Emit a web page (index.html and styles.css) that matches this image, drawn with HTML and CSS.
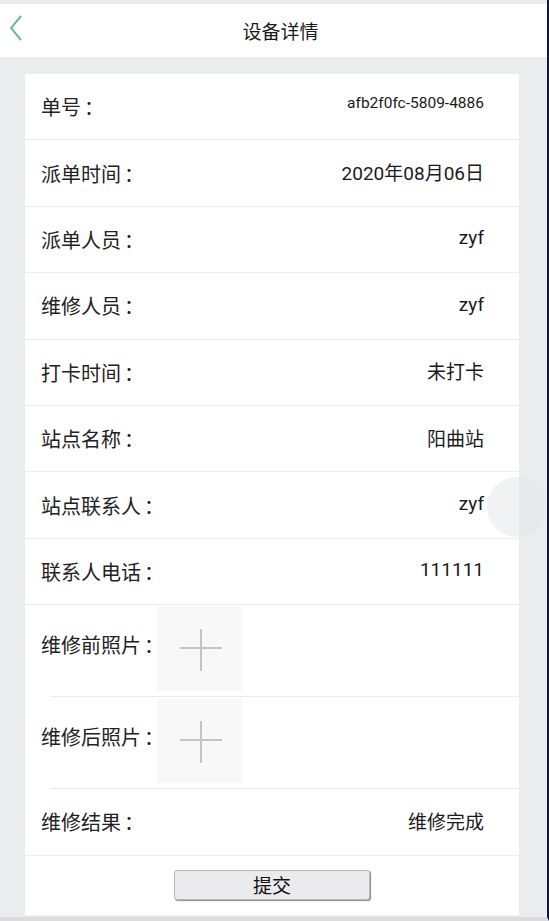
FILE: index.html
```html
<!DOCTYPE html>
<html lang="zh">
<head>
  <meta charset="UTF-8">
  <title>设备详情</title>
  <link rel="stylesheet" href="styles.css">
</head>
<body>

  <div class="header">
    <span class="back">
      <svg width="14" height="26" viewBox="0 0 14 26"><polyline points="12,1 2,13 12,25" fill="none" stroke="#6dbb8f" stroke-width="2"/></svg>
    </span>
    <h1>设备详情</h1>
  </div>

  <div class="card">
    <div class="row">
      <span class="label">单号<span class="colon">：</span></span>
      <span class="value small">afb2f0fc-5809-4886</span>
    </div>
    <div class="row">
      <span class="label">派单时间<span class="colon">：</span></span>
      <span class="value">2020年08月06日</span>
    </div>
    <div class="row">
      <span class="label">派单人员<span class="colon">：</span></span>
      <span class="value">zyf</span>
    </div>
    <div class="row">
      <span class="label">维修人员<span class="colon">：</span></span>
      <span class="value">zyf</span>
    </div>
    <div class="row">
      <span class="label">打卡时间<span class="colon">：</span></span>
      <span class="value">未打卡</span>
    </div>
    <div class="row">
      <span class="label">站点名称<span class="colon">：</span></span>
      <span class="value">阳曲站</span>
    </div>
    <div class="row">
      <span class="label">站点联系人<span class="colon">：</span></span>
      <span class="value">zyf</span>
    </div>
    <div class="row">
      <span class="label">联系人电话<span class="colon">：</span></span>
      <span class="value">111111</span>
    </div>
    <div class="photo-row">
      <span class="label">维修前照片<span class="colon">：</span></span>
      <div class="photo-add"></div>
    </div>
    <div class="photo-row">
      <span class="label">维修后照片<span class="colon">：</span></span>
      <div class="photo-add"></div>
    </div>
    <div class="row">
      <span class="label">维修结果<span class="colon">：</span></span>
      <span class="value">维修完成</span>
    </div>
    <div class="actions">
      <button class="submit">提交</button>
    </div>
  </div>

  <div class="float-ball"></div>

</body>
</html>
```

FILE: styles.css
```css
html, body {
  margin: 0;
  height: 100%;
}
body {
  font-family: Roboto, "Noto Sans CJK SC", sans-serif;
  background: #ebecee;
  color: #1a1a1a;
  padding-top: 4px;
  box-sizing: border-box;
  border-right: 2px solid #14163a;
  border-bottom: 4px solid #dcdcde;
}
.header {
  position: relative;
  height: 53px;
  background: #fff;
  display: flex;
  align-items: center;
  justify-content: center;
}
.header h1 {
  margin: 0;
  font-size: 19px;
  font-weight: normal;
  padding-left: 14px;
}
.back {
  position: absolute;
  left: 9px;
  top: 11px;
}
.card {
  background: #fff;
  margin: 17px 28px 0 25px;
  width: 494px;
}
.row {
  display: flex;
  align-items: center;
  justify-content: space-between;
  height: 65.4px;
  padding: 0 35px 0 16px;
  border-bottom: 1px solid #ececec;
}
.label {
  font-size: 20px;
  color: #222;
}
.colon {
  font-family: "Noto Sans CJK TC", sans-serif;
  margin-left: 3px;
}
.value {
  font-size: 19px;
  margin-top: -3px;
}
.value.small {
  font-size: 15.5px;
  margin-top: -8px;
}
.photo-row {
  display: flex;
  align-items: center;
  height: 91px;
  padding-left: 16px;
  margin-left: 25px;
  border-bottom: 1px solid #ececec;
}
.photo-row .label {
  margin: -12px -7px 0 -25px;
}
.photo-add {
  position: relative;
  width: 85px;
  height: 85px;
  margin-top: -5px;
  background: #f8f8f8;
}
.photo-add::before,
.photo-add::after {
  content: "";
  position: absolute;
  background: #c4c4c4;
}
.photo-add::before {
  left: 23px;
  top: 41px;
  width: 42px;
  height: 2px;
}
.photo-add::after {
  left: 43px;
  top: 23px;
  width: 2px;
  height: 42px;
}
.actions {
  display: flex;
  justify-content: center;
  padding: 14px 0 15px;
}
.submit {
  width: 196px;
  height: 30px;
  font-family: "Noto Sans CJK SC", sans-serif;
  font-size: 19px;
  color: #111;
  background: #ebebed;
  border: 1px solid #b8b8b8;
  border-radius: 3px;
  box-shadow: 1px 1px 1px #8a8a8a;
  line-height: 1;
}
.float-ball {
  position: absolute;
  left: 487px;
  top: 477px;
  width: 60px;
  height: 60px;
  border-radius: 50%;
  background: rgba(228, 229, 232, 0.5);
}
```
